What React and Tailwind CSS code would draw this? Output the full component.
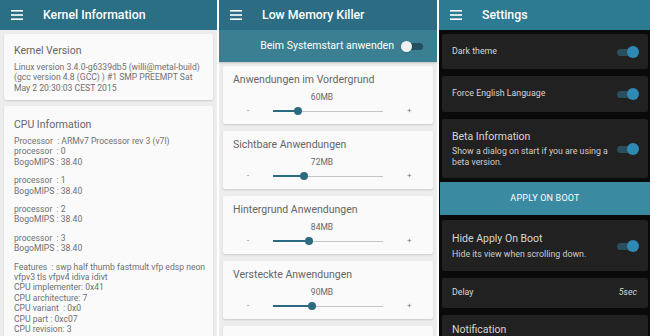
import React from 'react'

const font = { fontFamily: 'Roboto, "Noto Sans", sans-serif' }

function Burger() {
  return (
    <svg width="12" height="10" viewBox="0 0 12 10" className="shrink-0">
      <rect x="0" y="0" width="12" height="1.6" fill="#fff" />
      <rect x="0" y="4.2" width="12" height="1.6" fill="#fff" />
      <rect x="0" y="8.4" width="12" height="1.6" fill="#fff" />
    </svg>
  )
}

function Header({ title, bg }) {
  return (
    <div className={`h-[30px] shrink-0 flex items-center pl-[11px] ${bg}`}>
      <Burger />
      <span className="ml-[20px] text-white text-[12.3px] font-medium">{title}</span>
    </div>
  )
}

function Lines({ lines }) {
  return (
    <div className="text-[8.6px] leading-[10.4px] text-[#707070] whitespace-pre">
      {lines.map((l, i) => <div key={i}>{l}</div>)}
    </div>
  )
}

function KernelPanel() {
  const groups = [
    ['Processor  : ARMv7 Processor rev 3 (v7l)', 'processor  : 0', 'BogoMIPS : 38.40'],
    ['processor  : 1', 'BogoMIPS : 38.40'],
    ['processor  : 2', 'BogoMIPS : 38.40'],
    ['processor  : 3', 'BogoMIPS : 38.40'],
    ['Features  : swp half thumb fastmult vfp edsp neon', 'vfpv3 tls vfpv4 idiva idivt', 'CPU implementer: 0x41', 'CPU architecture: 7', 'CPU variant  : 0x0', 'CPU part : 0xc07', 'CPU revision: 3'],
  ]
  return (
    <div className="w-[217px] h-full flex flex-col bg-[#ededed] overflow-hidden">
      <Header title="Kernel Information" bg="bg-[#2b6f85]" />
      <div className="flex flex-col gap-[6px] pl-[4px] pr-[4px] pt-[4px]">
        <div className="bg-[#fafafa] rounded-[2px] shadow-[0_1px_2px_rgba(0,0,0,0.15)] pl-[10px] pt-[10px] h-[66px]">
          <div className="text-[10.5px] leading-[13px] text-[#666] mb-[5px]">Kernel Version</div>
          <Lines lines={['Linux version 3.4.0-g6339db5 (willi@metal-build)', '(gcc version 4.8 (GCC) ) #1 SMP PREEMPT Sat', 'May 2 20:30:03 CEST 2015']} />
        </div>
        <div className="bg-[#fafafa] rounded-[2px] shadow-[0_1px_2px_rgba(0,0,0,0.15)] pl-[10px] pt-[12px] h-[260px]">
          <div className="text-[10.5px] leading-[13px] text-[#666] mb-[5px]">CPU Information</div>
          <div className="flex flex-col gap-[8px]">
            {groups.map((g, i) => <Lines key={i} lines={g} />)}
          </div>
        </div>
      </div>
    </div>
  )
}

function SliderCard({ title, value, pos }) {
  return (
    <div className="bg-[#fafafa] rounded-[2px] shadow-[0_1px_2px_rgba(0,0,0,0.15)] h-[58px] shrink-0 pt-[7px]">
      <div className="pl-[10px] text-[10.5px] leading-[13px] text-[#666]">{title}</div>
      {title && (
        <>
          <div className="text-center text-[8.5px] leading-[10px] text-[#666] mt-[6px] pr-[12px]">{value}</div>
          <div className="flex items-center h-[10px] mt-[4px] text-[8px] text-[#777]">
            <span className="w-[50px] pl-[24px]">-</span>
            <div className="relative w-[110px] h-[10px]">
              <div className="absolute left-0 right-0 top-[4.5px] h-px bg-[#c4c4c4]" />
              <div className="absolute left-0 top-[4px] h-[2px] bg-[#2b6a80]" style={{ width: pos }} />
              <div className="absolute top-[1px] w-[8px] h-[8px] rounded-full bg-[#2b6a80]" style={{ left: pos - 4 }} />
            </div>
            <span className="pl-[24px]">+</span>
          </div>
        </>
      )}
    </div>
  )
}

function LmkPanel() {
  return (
    <div className="w-[218px] h-full flex flex-col bg-[#ededed] overflow-hidden">
      <Header title="Low Memory Killer" bg="bg-[#2c6d83]" />
      <div className="h-[32px] shrink-0 bg-[#3b7f93] flex items-center justify-end pr-[14px] shadow-[0_1px_2px_rgba(0,0,0,0.2)]">
        <span className="text-white text-[10.5px] mr-[7px]">Beim Systemstart anwenden</span>
        <div className="relative w-[22px] h-[10px]">
          <div className="absolute left-[3px] right-0 top-[2px] h-[7px] rounded-full bg-[#23505e]" />
          <div className="absolute left-0 top-0 w-[11px] h-[11px] rounded-full bg-[#f1f1f1] shadow" />
        </div>
      </div>
      <div className="flex flex-col gap-[7px] px-[4px] pt-[4px]">
        <SliderCard title="Anwendungen im Vordergrund" value="60MB" pos={25} />
        <SliderCard title="Sichtbare Anwendungen" value="72MB" pos={31} />
        <SliderCard title="Hintergrund Anwendungen" value="84MB" pos={36} />
        <SliderCard title="Versteckte Anwendungen" value="90MB" pos={39} />
        <SliderCard title="" value="" pos={0} />
      </div>
    </div>
  )
}

function Toggle() {
  return (
    <div className="relative w-[22px] h-[12px] shrink-0">
      <div className="absolute left-0 right-[3px] top-[3px] h-[7px] rounded-full bg-[#2a4f5c]" />
      <div className="absolute right-0 top-0 w-[12px] h-[12px] rounded-full bg-[#2f8ab3]" />
    </div>
  )
}

function DarkCard({ children, h }) {
  return (
    <div className={`bg-[#212121] rounded-[2px] flex items-center justify-between pl-[10px] pr-[9px] shrink-0 ${h}`}>
      {children}
    </div>
  )
}

function SettingsPanel() {
  return (
    <div className="w-[211px] h-full flex flex-col bg-[#0a0a0a] overflow-hidden">
      <Header title="Settings" bg="bg-[#2d7a93]" />
      <div className="flex flex-col pt-[4px]">
        <div className="flex flex-col gap-[7px] pl-[3px] pr-[2px]">
          <DarkCard h="h-[35px]">
            <span className="text-[8.8px] text-[#d6d6d6]">Dark theme</span>
            <Toggle />
          </DarkCard>
          <DarkCard h="h-[36px]">
            <span className="text-[8.8px] text-[#d6d6d6]">Force English Language</span>
            <Toggle />
          </DarkCard>
          <DarkCard h="h-[59px]">
            <div className="flex flex-col">
              <span className="text-[10.5px] leading-[13px] text-[#d6d6d6] mb-[3px]">Beta Information</span>
              <span className="text-[8.8px] leading-[11px] text-[#cccccc] w-[160px]">Show a dialog on start if you are using a beta version.</span>
            </div>
            <Toggle />
          </DarkCard>
        </div>
        <div className="h-[33px] mt-[4px] ml-[1px] bg-[#3a8aa2] flex items-center justify-center text-white text-[9px] tracking-[0.2px]">APPLY ON BOOT</div>
        <div className="flex flex-col gap-[7px] pl-[3px] pr-[2px] mt-[5px]">
          <DarkCard h="h-[51px]">
            <div className="flex flex-col">
              <span className="text-[10.5px] leading-[13px] text-[#d6d6d6] mb-[4px]">Hide Apply On Boot</span>
              <span className="text-[8.8px] leading-[11px] text-[#cccccc]">Hide its view when scrolling down.</span>
            </div>
            <Toggle />
          </DarkCard>
          <DarkCard h="h-[30px]">
            <span className="text-[8.8px] text-[#d6d6d6]">Delay</span>
            <span className="text-[8.8px] italic text-[#d6d6d6] mr-[2px]">5sec</span>
          </DarkCard>
          <div className="bg-[#212121] rounded-[2px] h-[40px] pl-[10px] pt-[8px] text-[10.5px] leading-[13px] text-[#d6d6d6]">Notification</div>
        </div>
      </div>
    </div>
  )
}

export default function App() {
  return (
    <div className="w-[650px] h-[336px] flex gap-[2px] bg-white overflow-hidden" style={font}>
      <KernelPanel />
      <LmkPanel />
      <SettingsPanel />
    </div>
  )
}
